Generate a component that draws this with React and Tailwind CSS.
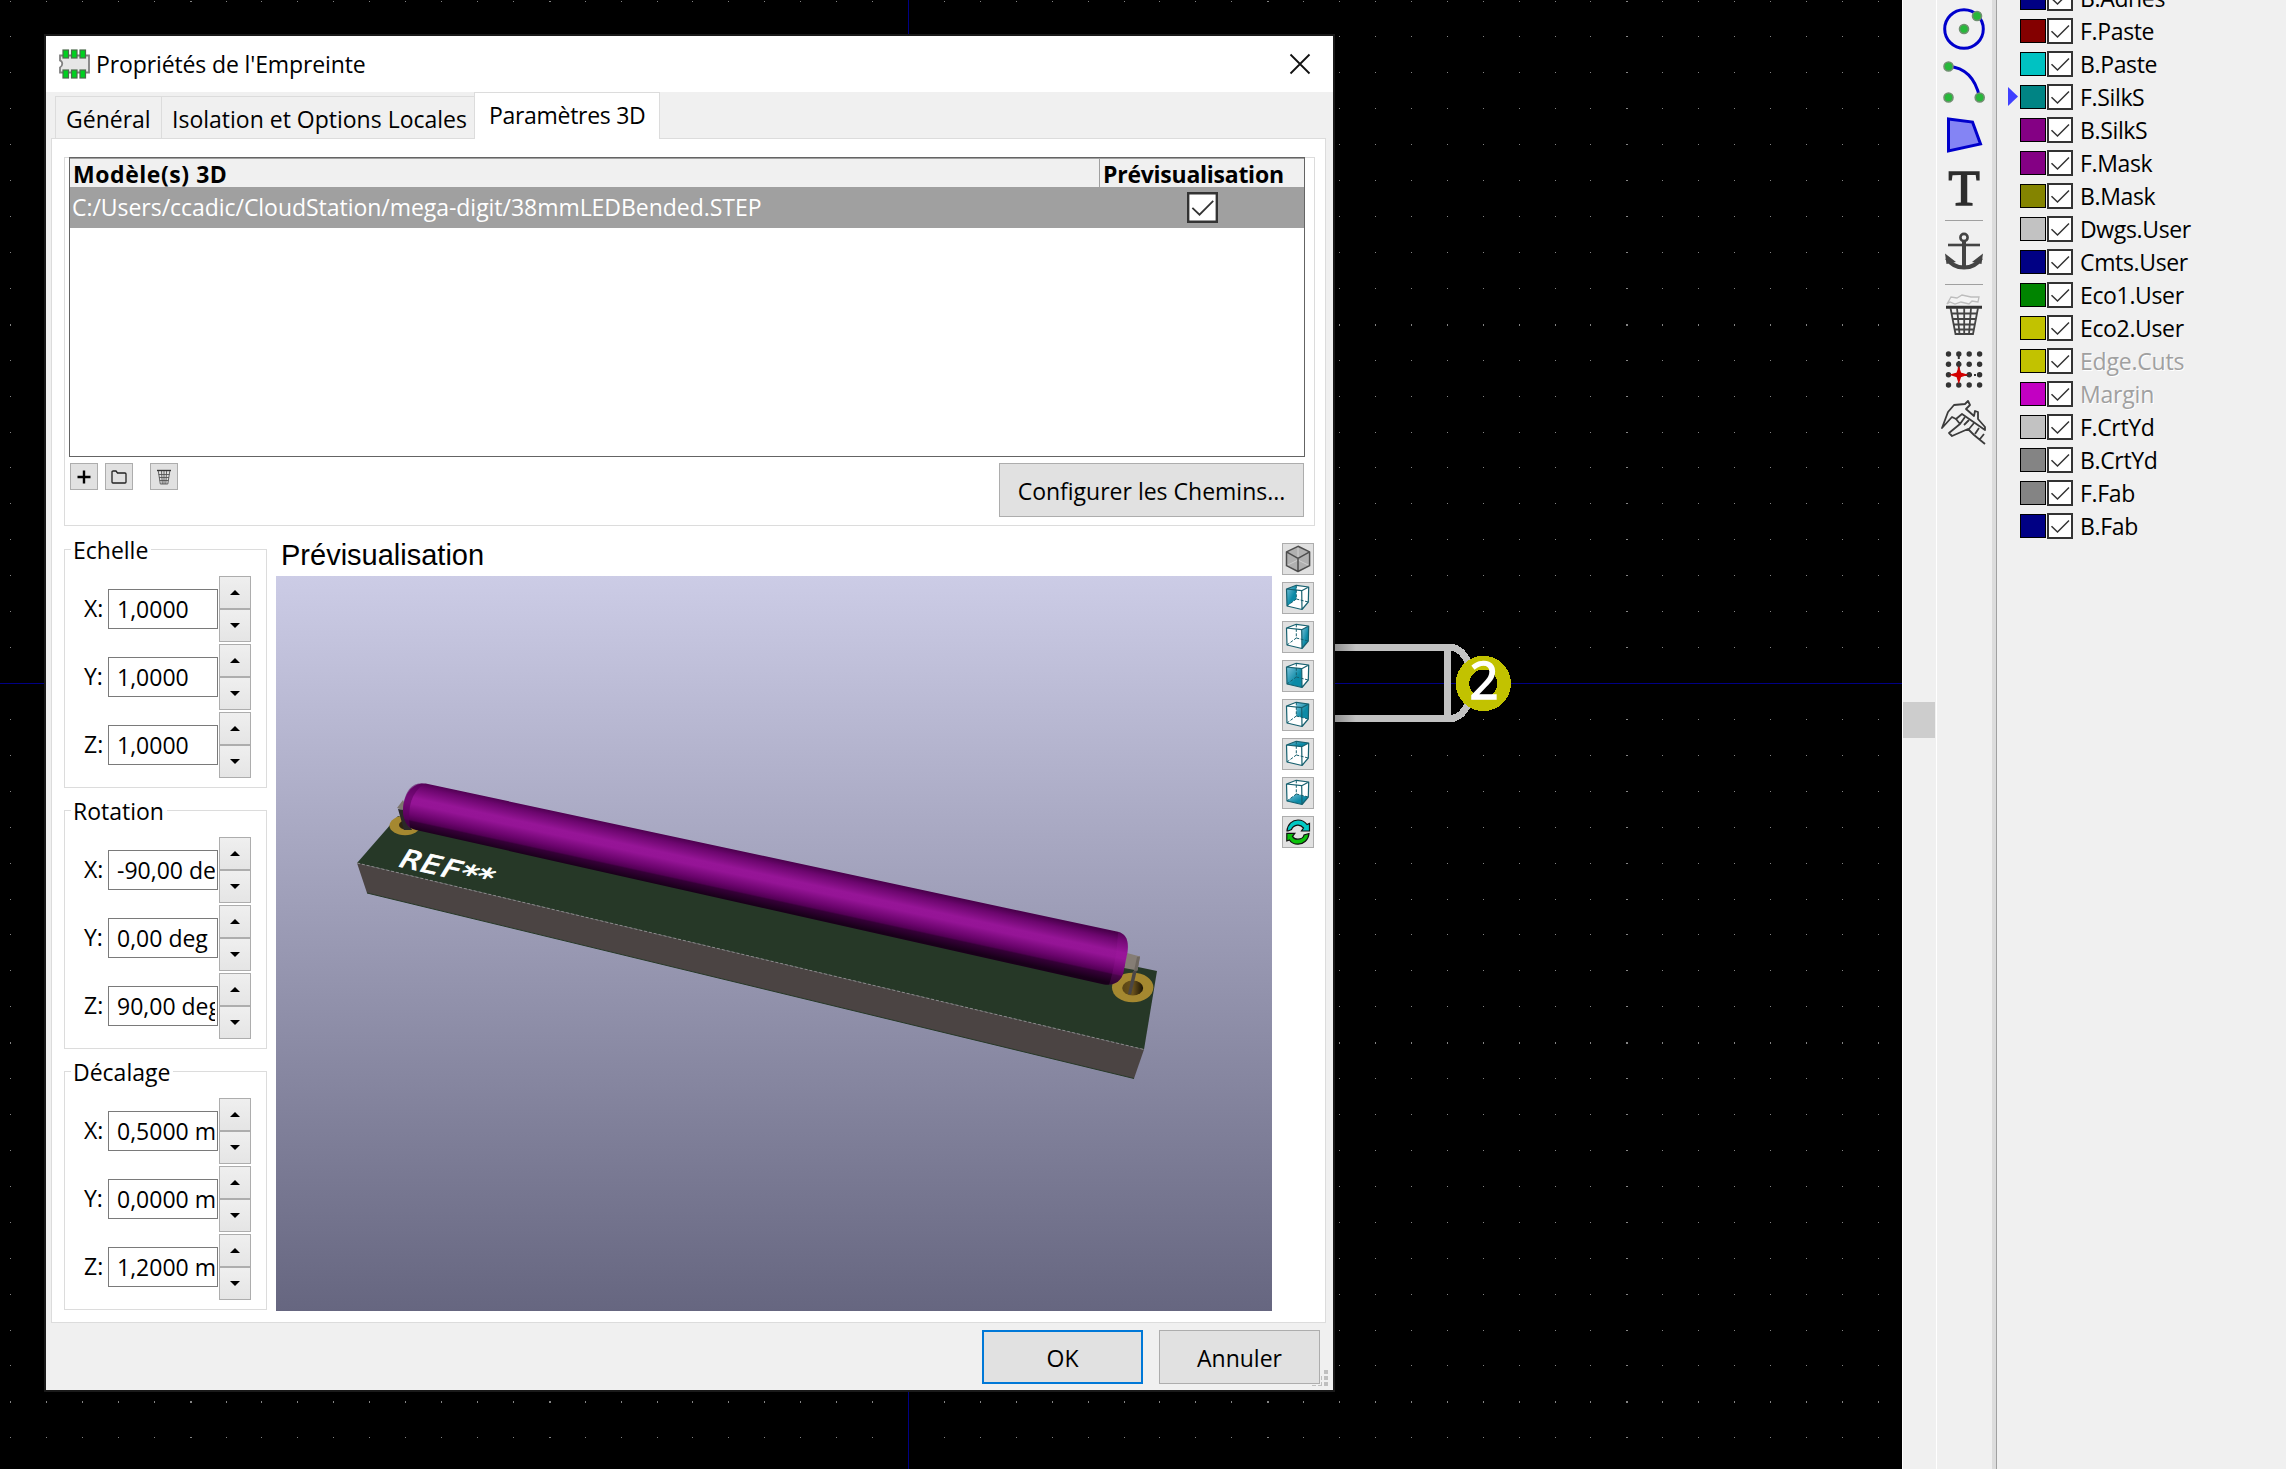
import React from 'react'

const layers = [
  ['B.Adhes', '#000084'],
  ['F.Paste', '#840000'],
  ['B.Paste', '#00c2c2'],
  ['F.SilkS', '#008484'],
  ['B.SilkS', '#840084'],
  ['F.Mask', '#840084'],
  ['B.Mask', '#848400'],
  ['Dwgs.User', '#c2c2c2'],
  ['Cmts.User', '#000084'],
  ['Eco1.User', '#008400'],
  ['Eco2.User', '#c2c200'],
  ['Edge.Cuts', '#c2c200'],
  ['Margin', '#c200c2'],
  ['F.CrtYd', '#c2c2c2'],
  ['B.CrtYd', '#848484'],
  ['F.Fab', '#848484'],
  ['B.Fab', '#000084'],
]

const groups = [
  ['Echelle', ['1,0000', '1,0000', '1,0000']],
  ['Rotation', ['-90,00 deg', '0,00 deg', '90,00 deg']],
  ['Décalage', ['0,5000 mm', '0,0000 mm', '1,2000 mm']],
]

/* Grid dots: 35.9 px pitch around the axes, every tenth line slightly heavier. */
function GridDots() {
  const dots = []
  for (let i = -25; i <= 27; i++) {
    for (let j = -19; j <= 21; j++) {
      if (i === 0 || j === 0) continue
      dots.push(
        <rect
          key={i + '_' + j}
          x={Math.round(908 + i * 35.92)}
          y={Math.round(683 + j * 35.92)}
          width={i % 10 === 0 ? 2 : 1}
          height={j % 10 === 0 ? 2 : 1}
        />
      )
    }
  }
  return <g fill="#848484">{dots}</g>
}

function Canvas() {
  return (
    <svg className="block h-[1469px] w-[1902px] bg-black" viewBox="0 0 1902 1469" shapeRendering="crispEdges">
      <defs>
        <linearGradient id="fade" gradientUnits="userSpaceOnUse" x1="1333" x2="1356" y1="0" y2="0">
          <stop offset="0" stopColor="#8c8c8c" />
          <stop offset="1" stopColor="#c2c2c2" />
        </linearGradient>
      </defs>
      <GridDots />
      <path d="M0 683.5H1902M908.5 0V1469" stroke="#000084" />
      <path d="M1330 644H1455V651H1330zM1330 715H1455V722H1330z" fill="url(#fade)" />
      <path d="M1444 646h7v74h-7z" fill="#c2c2c2" />
      <path d="M1453 647.6C1462 650 1468 658 1471 672M1453 718.4C1462 716 1468 708 1471 694" fill="none" stroke="#c2c2c2" strokeWidth="7" />
      <circle cx="1483.3" cy="683.5" r="20.8" fill="#000" stroke="#c2c200" strokeWidth="13.6" />
      <text x="1484" y="699" textAnchor="middle" fill="#fff" stroke="#fff" strokeWidth="1.500" fontFamily="Open Sans, sans-serif" fontSize="51">2</text>
    </svg>
  )
}

function Check({ s }) {
  return (
    <svg width={s} height={s} viewBox="0 0 26 26" className="block shrink-0">
      <path d="M1 1h24v24H1z" fill="#fff" stroke="#333" strokeWidth="2" />
      <path d="M4.500 13.300L10.500 19 22 7.500" fill="none" stroke="#333" strokeWidth="1.500" />
    </svg>
  )
}

function CloseIcon() {
  return (
    <svg width="22" height="22" viewBox="0 0 22 22">
      <path d="M1.500 1.500l19 19M20.500 1.500l-19 19" stroke="#111" strokeWidth="1.800" />
    </svg>
  )
}

function FootprintIcon() {
  return (
    <svg width="31" height="30" viewBox="0 0 31 30">
      <path d="M1 6.500H30V23.500H1V18.500C4 17 4 12.500 1 11.500z" fill="#e6e6e6" stroke="#808080" strokeWidth="1.800" />
      <g fill="#00d020" stroke="#4d6b4d" strokeWidth="1.200">
        {[4, 12.5, 21].map((x) => (
          <React.Fragment key={x}>
            <rect x={x} y="1" width="5.500" height="8" />
            <rect x={x} y="21" width="5.500" height="8" />
          </React.Fragment>
        ))}
      </g>
    </svg>
  )
}

const faces = {
  left: '4.500,7 14.300,3.300 14.300,17 5,24',
  right: '19.700,8.700 26.700,5 26.300,20 20,27.500',
  front: '4.500,7 19.700,8.700 20,27.500 5,24',
  back: '14.300,3.300 26.700,5 26.300,20 14.300,17',
  top: '4.500,7 14.300,3.300 26.700,5 19.700,8.700',
  bottom: '5,24 14.300,17 26.300,20 20,27.500',
}

function ViewCube({ face }) {
  return (
    <svg width="30" height="30" viewBox="1 1 30 30" className="block">
      <defs>
        <linearGradient id={'cube-' + face} x1="0" y1="0" x2="1" y2="1">
          <stop offset="0" stopColor="#7fc4dc" />
          <stop offset="0.600" stopColor="#0c8aa6" />
          <stop offset="1" stopColor="#0c8aa6" />
        </linearGradient>
      </defs>
      <path d="M4.500 7L14.300 3.300 26.700 5 26.300 20 20 27.500 5 24z" fill="#fff" />
      <polygon points={faces[face]} fill={'url(#cube-' + face + ')'} />
      <path d="M14.300 3.300V17L5 24M14.300 17L26.300 20" fill="none" stroke="#16606f" strokeWidth="1" strokeDasharray="3 1.500" />
      <path d="M4.500 7L14.300 3.300 26.700 5 26.300 20 20 27.500 5 24zM4.500 7L19.700 8.700 26.700 5M19.700 8.700L20 27.500" fill="none" stroke="#16606f" strokeWidth="1.200" strokeLinejoin="round" />
    </svg>
  )
}

function IsoCube() {
  return (
    <svg width="30" height="30" viewBox="1 1 30 30" className="block">
      <path d="M16 3.300L27.600 8.900V22.700L16 28.500 4.500 22.700V8.900z" fill="#b0b0b0" />
      <path d="M16 3.300V15.300M4.500 22.700L16 17 27.600 22.700" fill="none" stroke="#cfcfcf" strokeWidth="1" />
      <path d="M16 3.300L27.600 8.900V22.700L16 28.500 4.500 22.700V8.900zM4.500 8.900L16 15.300 27.600 8.900M16 15.300V28.500" fill="none" stroke="#4d4d4d" strokeWidth="1.500" strokeLinejoin="round" />
    </svg>
  )
}

function RefreshIcon() {
  return (
    <svg width="30" height="30" viewBox="1 1 30 30" className="block">
      <path d="M5 15C5.500 8 10.500 4 16 4C20 4 23 5.800 25 8.500L27.500 7.500V15H19.500L21.500 12C19.500 9.600 17.500 9 15.500 9.200C12.500 9.500 10.500 11 9.500 13.500L6 15z" fill="#00c9c4" stroke="#111" strokeWidth="1.200" />
      <path d="M27 17.500C26.500 24 21.500 28.200 16 28.200C12 28.200 9 26.500 7.500 24L4.800 25V17.300H12.800L10.500 20.300C12 22.600 14 23.300 16 23.200C19 23 21.500 21.500 22 19z" fill="#0cc20c" stroke="#111" strokeWidth="1.200" />
    </svg>
  )
}

function PlusIcon() {
  return (
    <svg width="14" height="14" viewBox="0 0 14 14">
      <path d="M7 .5v13M.5 7h13" stroke="#000" strokeWidth="2.400" />
    </svg>
  )
}

function FolderIcon() {
  return (
    <svg width="16" height="14" viewBox="0 0 16 14">
      <path d="M1 12V2.200Q1 1 2.200 1H5l1.500 2H14Q15 3 15 4V12Q15 13 14 13H2Q1 13 1 12z" fill="none" stroke="#222" strokeWidth="1.300" />
    </svg>
  )
}

function SmallTrashIcon() {
  return (
    <svg width="16" height="16" viewBox="0 0 16 16">
      <path d="M1 1.500h14" stroke="#333" strokeWidth="1.400" />
      <path d="M2.300 2l2 13h7.500l2-13M5.500 2l.8 13M8 2v13M10.600 2l-.8 13M2.700 5.500h10.800M3.200 8.500h9.700M3.700 11.500h8.600" fill="none" stroke="#555" strokeWidth=".9" />
    </svg>
  )
}

function Spin({ axis, value }) {
  return (
    <div className="flex h-[68px] items-center">
      <span className="w-[25px] pb-[2px] pl-[1px] leading-none">{axis}:</span>
      <div className="h-[40px] w-[110px] border border-[#7a7a7a] bg-white pr-[2px] pl-[8px]">
        <div className="overflow-hidden leading-[38px] whitespace-nowrap">{value}</div>
      </div>
      <div className="ml-px flex h-[66px] w-[32px] flex-col bg-[#f0f0f0]">
        {['M0 5L5 0 10 5z', 'M0 0H10L5 5z'].map((d) => (
          <div key={d} className="flex flex-1 items-center justify-center border border-[#adadad] bg-linear-to-b from-[#efefef] to-[#e5e5e5]">
            <svg width="10" height="5" viewBox="0 0 10 5"><path d={d} /></svg>
          </div>
        ))}
      </div>
    </div>
  )
}

function Group({ title, values }) {
  return (
    <div className="h-[239px] w-[203px] border border-[#dcdcdc] pl-[18px]">
      <div className="-mt-[12px] -ml-[12px] h-[24px] w-fit bg-white pr-[3px] pl-[2px] leading-[24px]">{title}</div>
      <div className="mt-[13px]">
        {['X', 'Y', 'Z'].map((a, i) => (
          <Spin key={a} axis={a} value={values[i]} />
        ))}
      </div>
    </div>
  )
}

function Scene() {
  return (
    <svg className="block h-[735px] w-[996px]" viewBox="276 576 996 735">
      <defs>
        <linearGradient id="sky" x1="0" y1="0" x2="0" y2="1">
          <stop offset="0" stopColor="#cccce6" />
          <stop offset="1" stopColor="#666680" />
        </linearGradient>
        <linearGradient id="tube" gradientUnits="userSpaceOnUse" x1="760" y1="855" x2="749.300" y2="904">
          <stop offset="0" stopColor="#4a004c" />
          <stop offset="0.130" stopColor="#6c066e" />
          <stop offset="0.360" stopColor="#961597" />
          <stop offset="0.480" stopColor="#951496" />
          <stop offset="0.700" stopColor="#6b046d" />
          <stop offset="0.800" stopColor="#520054" />
          <stop offset="0.830" stopColor="#360038" />
          <stop offset="1" stopColor="#180019" />
        </linearGradient>
        <linearGradient id="hole" x1="0" y1="0" x2="1" y2="0">
          <stop offset="0" stopColor="#5a4514" />
          <stop offset="0.500" stopColor="#6b531c" />
          <stop offset="1" stopColor="#1a1204" />
        </linearGradient>
      </defs>
      <rect x="276" y="576" width="996" height="735" fill="url(#sky)" />
      <polygon points="357,863 398,816 1138,967 1157,971 1144,1049.500" fill="#263827" />
      <polygon points="357,863 1144,1049.500 1134,1078.500 367,893" fill="#4b4443" />
      <path d="M357 863L1144 1049.500" stroke="#8b8b8b" strokeWidth="1" strokeDasharray="3 2" />
      <path d="M367 893L1134 1078.500" stroke="#263827" strokeWidth="1" />
      <ellipse cx="405" cy="825.500" rx="15.500" ry="9.700" fill="#a58830" />
      <ellipse cx="406" cy="825" rx="7" ry="4.500" fill="#2d2410" />
      <polygon points="397,808 403,800 406,806 403,810" fill="#7d766e" />
      <polygon points="398,809 404,810 412,830 404,830" fill="#2b2827" />
      <ellipse cx="1132.700" cy="987.500" rx="20.700" ry="14.800" fill="#a58830" />
      <ellipse cx="1132.700" cy="988" rx="10.500" ry="7.600" fill="url(#hole)" />
      <polygon points="1133,971 1137,970 1131,994.500 1128,994" fill="#4a4646" />
      <polygon points="1127,953 1140,956.500 1137.500,970.500 1124,968" fill="#857d75" />
      <polygon points="1137,957 1140,956.500 1137.500,970.500 1134,971" fill="#6e6760" />
      <path d="M428 784L1118 931.800C1126 934 1129 940 1127.500 952L1123.500 972C1121.500 982 1113 986 1104 984.500L416 830C407 828 403 820 403 810C404 792 414 781 428 784z" fill="url(#tube)" />
      <path d="M1118 932C1126 934 1129 940 1127.500 952L1123.500 972C1121.500 980 1115 985.500 1109 984.800C1114 970 1117 950 1118 932z" fill="#a51aa8" fillOpacity=".18" />
      <path d="M424 784C412 781 404 792 403 810C403 818 406 825 410 828C407 806 412 792 424 784z" fill="#5a005c" fillOpacity=".55" />
      <text
        transform="matrix(1.640 .373 -.753 1.233 397 866)"
        x="0 12.300 24.600 35.500 45"
        y="0 0 0 .8 .3"
        fill="#fff"
        stroke="#fff"
        strokeWidth=".6"
        fontFamily="DejaVu Sans Mono, monospace"
        fontSize="19"
      >
        REF**
      </text>
    </svg>
  )
}

function IconButton({ children }) {
  return <div className="h-[32px] w-[32px] border border-[#adadad] bg-[#e1e1e1]">{children}</div>
}

function ToolButton({ children }) {
  return <div className="flex h-[27px] w-[28px] items-center justify-center border border-[#adadad] bg-[#e1e1e1]">{children}</div>
}

function Dialog() {
  return (
    <div className="absolute top-[34px] left-[44px] flex h-[1358px] w-[1291px] flex-col border-2 border-[#1a1a1a] bg-[#f0f0f0]">
      <div className="flex h-[56px] shrink-0 items-center bg-white pl-[13px]">
        <FootprintIcon />
        <span className="ml-[6px] tracking-[-0.12px]">Propriétés de l'Empreinte</span>
        <span className="mr-[22px] mb-[1px] ml-auto"><CloseIcon /></span>
      </div>
      <div className="flex h-[46px] shrink-0 items-end pl-[9px]">
        <div className="h-[42px] w-[106px] border-t border-l border-[#dcdcdc] pt-[3px] pl-[10px] leading-[38px]">Général</div>
        <div className="h-[42px] w-[313px] border-t border-l border-[#dcdcdc] pt-[3px] pl-[10px] leading-[38px] whitespace-nowrap">Isolation et Options Locales</div>
        <div className="relative z-10 -mb-px h-[47px] w-[186px] border border-b-0 border-[#dcdcdc] bg-white pl-[14px] leading-[44px] tracking-[-0.300px] whitespace-nowrap">Paramètres 3D</div>
      </div>
      <div className="ml-[5px] h-[1185px] w-[1275px] shrink-0 border border-[#dcdcdc] bg-white pt-[18px] pl-[12px]">
        <div className="h-[369px] w-[1251px] border border-[#dcdcdc] pl-[4px]">
          <div className="-mt-px h-[300px] w-[1236px] border border-[#646464] bg-white">
            <div className="flex h-[29px] border-t border-[#a0a0a0] bg-[#f0f0f0] font-bold">
              <div className="w-[1030px] border-r border-[#a0a0a0] pl-[3px] leading-[31px] tracking-[0.550px]">Modèle(s) 3D</div>
              <div className="pl-[3px] leading-[31px] tracking-[-0.250px]">Prévisualisation</div>
            </div>
            <div className="flex h-[41px] items-center bg-[#a0a0a0]">
              <span className="w-[1117px] pl-[2px] tracking-[-0.040px] text-white">C:/Users/ccadic/CloudStation/mega-digit/38mmLEDBended.STEP</span>
              <Check s={31} />
            </div>
          </div>
          <div className="mt-[6px] flex">
            <div className="flex pl-px">
              <ToolButton><PlusIcon /></ToolButton>
              <div className="w-[7px]" />
              <ToolButton><FolderIcon /></ToolButton>
              <div className="w-[17px]" />
              <ToolButton><SmallTrashIcon /></ToolButton>
            </div>
            <div className="mr-[10px] ml-auto h-[54px] w-[305px] border border-[#adadad] bg-[#e1e1e1] pt-px text-center leading-[52px]">Configurer les Chemins...</div>
          </div>
        </div>
        <div className="flex">
          <div className="flex flex-col gap-[22px] pt-[23px]">
            {groups.map(([t, v]) => (
              <Group key={t} title={t} values={v} />
            ))}
          </div>
          <div className="ml-[9px] w-[996px] pt-[10px]">
            <div className="h-[40px] pl-[5px] font-['Liberation_Sans',Arial,sans-serif] text-[29px] leading-[38px]">Prévisualisation</div>
            <Scene />
          </div>
          <div className="ml-[10px] flex flex-col gap-[7px] pt-[17px]">
            <IconButton><IsoCube /></IconButton>
            <IconButton><ViewCube face="left" /></IconButton>
            <IconButton><ViewCube face="right" /></IconButton>
            <IconButton><ViewCube face="front" /></IconButton>
            <IconButton><ViewCube face="back" /></IconButton>
            <IconButton><ViewCube face="top" /></IconButton>
            <IconButton><ViewCube face="bottom" /></IconButton>
            <IconButton><RefreshIcon /></IconButton>
          </div>
        </div>
      </div>
      <div className="mt-[7px] flex justify-end gap-[16px] pr-[13px] text-center">
        <div className="h-[54px] w-[161px] border-2 border-[#0078d7] bg-[#e1e1e1] leading-[52px]">OK</div>
        <div className="h-[54px] w-[161px] border border-[#adadad] bg-[#e1e1e1] pt-px leading-[52px]">Annuler</div>
      </div>
      <svg className="absolute right-[5px] bottom-[4px]" width="16" height="16" viewBox="0 0 16 16">
        <path d="M12 0h4v4h-4zM12 6h4v4h-4zM12 12h4v4h-4zM9 6h1v4h-1zM6 15h4v1h-4zM9 12h1v4h-1zM0 15h4v1h-4z" fill="#bfbfbf" />
      </svg>
    </div>
  )
}

const bluePen = { fill: 'none', stroke: '#0000cc', strokeWidth: 3 }

function Node({ x, y }) {
  return <circle cx={x} cy={y} r="4.500" fill="#27b83a" stroke="#6f8f6f" strokeWidth="1.600" />
}

function Toolbar() {
  return (
    <div className="flex w-[55px] flex-col items-center bg-[#f0f0f0] pr-px">
      <svg width="44" height="44" viewBox="0 0 44 44" className="mt-[7px]">
        <circle cx="22" cy="22" r="19.300" {...bluePen} />
        <Node x="22" y="22" />
        <Node x="35" y="9" />
      </svg>
      <svg width="44" height="44" viewBox="0 0 44 44" className="mt-[9px]">
        <path d="M6.500 6.500Q31 8 37.500 37" {...bluePen} />
        <Node x="6.500" y="6.500" />
        <Node x="6.500" y="37.500" />
        <Node x="37.700" y="37.500" />
      </svg>
      <svg width="44" height="44" viewBox="0 0 44 44" className="mt-[10px]">
        <path d="M6.500 5L30.500 8 38.500 30 6.500 37z" fill="#8484f4" stroke="#0000cc" strokeWidth="3" />
      </svg>
      <svg width="44" height="48" viewBox="0 0 44 48" className="mt-[9px] -mb-[4px]">
        <text x="22" y="37.500" textAnchor="middle" fill="#2d2d2d" stroke="#2d2d2d" strokeWidth="1.600" fontFamily="Liberation Serif, serif" fontSize="51">T</text>
      </svg>
      <div className="mt-[9px] h-px w-[38px] bg-[#a0a0a0]" />
      <svg width="44" height="44" viewBox="0 0 44 44" className="mt-[9px]">
        <g fill="none" stroke="#444">
          <circle cx="22" cy="7.500" r="3.600" strokeWidth="2.600" />
          <path d="M22 11V39" strokeWidth="4" />
          <path d="M6 15H38" strokeWidth="2.600" />
          <path d="M5 28C9 35 16 37.500 22 37.500C28 37.500 35 35 39 28" strokeWidth="4.200" />
        </g>
        <path d="M3 23.500L4.500 34 14 32zM41 23.500L39.500 34 30 32z" fill="#444" />
      </svg>
      <div className="mt-[10px] h-px w-[38px] bg-[#a0a0a0]" />
      <svg width="44" height="44" viewBox="0 0 44 44" className="mt-[8px]">
        <path d="M5 11L9 4 15 5 20 2 29 4 37 4 36 9 30 8 27 11 19 9 13 11 8 9z" fill="#f4f4f4" stroke="#bdbdbd" strokeWidth="1.300" />
        <path d="M4 14.300H40" stroke="#333" strokeWidth="3" />
        <path d="M8.500 15L13.500 41H31L36 15M15 15l2.500 26M22.200 15v26M29 15l-2 26M10 20.500H35M11 26H34M12 31.500H33M13 36.500H32" fill="none" stroke="#444" strokeWidth="1.800" />
      </svg>
      <svg width="44" height="44" viewBox="0 0 44 44" className="mt-[11px]">
        <path d="M16.800 8V22M22 27H34" stroke="#333" strokeWidth="2" strokeDasharray="3 2" />
        {[6.5, 16.8, 27.2, 37.6].map((x) =>
          [6, 16.3, 26.8, 37].map((y) => <circle key={x + '-' + y} cx={x} cy={y} r="2.700" fill="#333" />)
        )}
        <path d="M16.800 20L18.500 25.100 24 26.800 18.500 28.500 16.800 34 15.100 28.500 9.500 26.800 15.100 25.100z" fill="#d40000" stroke="#d40000" strokeWidth="1.400" />
      </svg>
      <svg width="48" height="48" viewBox="0 0 48 48" className="mt-[7px]">
        <g fill="none" stroke="#3c3c3c" strokeWidth="1.800" strokeLinejoin="round">
          <path d="M2 29L8 13 14 6 25 5 28 2 30 6 26 10 34 17 35 12 38 13 38 20 45 28V31L22 15 16 20 12 18z" />
          <path d="M16 20L20 25 9 34 12 37 28 30 34 36 45 45M20 25L25 18M24 26L29 21M29 30L34 24M35 35L39 29M40 40L44 35" />
        </g>
      </svg>
    </div>
  )
}

function LayerPanel() {
  return (
    <div className="flex-1 overflow-hidden bg-[#f0f0f0]">
      <div className="-mt-[19px]">
        {layers.map(([name, color]) => (
          <div key={name} className="flex h-[33px] items-center">
            <div className="flex w-[23px] justify-end pr-[2px] pb-px">
              {name === 'F.SilkS' && (
                <svg width="10" height="19" viewBox="0 0 10 19"><path d="M0 0L10 9.500 0 19z" fill="#4040ff" /></svg>
              )}
            </div>
            <div className="h-[24px] w-[26px] border border-black" style={{ backgroundColor: color }} />
            <div className="ml-px"><Check s={26} /></div>
            <span
              className={
                name === 'Edge.Cuts' || name === 'Margin'
                  ? 'ml-[7px] pt-px tracking-[-0.200px] text-[#a0a0a0] [text-shadow:1px_1px_0_#fff]'
                  : 'ml-[7px] pt-px tracking-[-0.350px] text-black'
              }
            >
              {name}
            </span>
          </div>
        ))}
      </div>
    </div>
  )
}

export default function App() {
  return (
    <div className="relative flex h-[1469px] w-[2286px] overflow-hidden bg-black font-['Open_Sans','Noto_Sans',sans-serif] text-[23px] leading-none text-black">
      <Canvas />
      <div className="w-[35px] border-x border-white bg-[#f0f0f0] pt-[702px]">
        <div className="h-[36px] w-[32px] bg-[#cdcdcd]" />
      </div>
      <Toolbar />
      <div className="w-[5px] border-r border-[#a0a0a0] bg-[#dcdcdc]" />
      <LayerPanel />
      <Dialog />
    </div>
  )
}
